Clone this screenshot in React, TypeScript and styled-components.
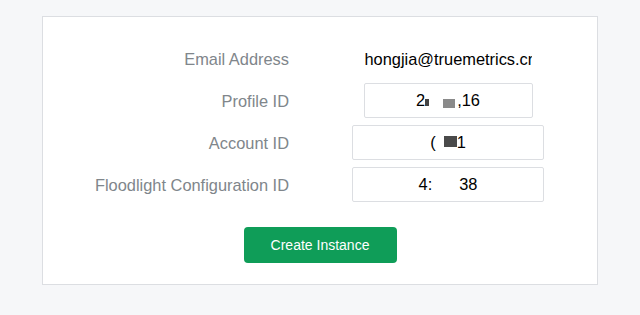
import React from "react";
import styled, { createGlobalStyle } from "styled-components";

const Global = createGlobalStyle`
  html, body { margin: 0; padding: 0; background: #f6f7f9; }
  body { font-family: "Liberation Sans", Arial, sans-serif; }
`;

const Page = styled.div`
  padding: 16px 42px 0;
  height: 315px;
  box-sizing: border-box;
`;

const Card = styled.div`
  background: #fff;
  border: 1px solid #dcdee2;
  box-sizing: border-box;
  height: 269px;
  padding: 24px 0 0;
  display: flex;
  flex-direction: column;
  align-items: center;
`;

const Form = styled.div`
  display: grid;
  grid-template-columns: 246px 192px;
  grid-auto-rows: 35px;
  column-gap: 63px;
  row-gap: 7px;
  align-self: flex-start;
`;

const Label = styled.div`
  justify-self: end;
  align-self: center;
  color: #80868b;
  font-size: 16.4px;
  line-height: 20px;
`;

const Value = styled.div`
  justify-self: center;
  align-self: center;
  width: 167px;
  overflow: hidden;
  white-space: nowrap;
  color: #000;
  font-size: 16.4px;
  line-height: 20px;
`;

const Field = styled.div<{ $w: number }>`
  justify-self: center;
  width: ${(p) => p.$w}px;
  height: 35px;
  box-sizing: border-box;
  border: 1px solid #dcdee2;
  border-radius: 2px;
  display: flex;
  align-items: center;
  justify-content: center;
  color: #000;
  font-size: 16.4px;
`;

const Mask = styled.span<{ $w: number; $h: number; $c: string; $ml?: number; $mr?: number; $dy?: number }>`
  display: inline-block;
  width: ${(p) => p.$w}px;
  height: ${(p) => p.$h}px;
  background: ${(p) => p.$c};
  margin-left: ${(p) => p.$ml ?? 0}px;
  margin-right: ${(p) => p.$mr ?? 0}px;
  position: relative;
  top: ${(p) => p.$dy ?? 0}px;
`;

const Gap = styled.span<{ $w: number }>`
  display: inline-block;
  width: ${(p) => p.$w}px;
`;

const Button = styled.button`
  margin-top: 25px;
  width: 153px;
  height: 36px;
  border: none;
  border-radius: 4px;
  background: #0f9d58;
  color: #fff;
  font-family: "Liberation Sans", Arial, sans-serif;
  font-size: 14px;
  cursor: pointer;
`;

export default function App() {
  return (
    <>
      <Global />
      <Page>
        <Card>
          <Form>
            <Label>Email Address</Label>
            <Value>hongjia@truemetrics.cn</Value>

            <Label>Profile ID</Label>
            <Field $w={169}>
              2<Mask $w={4} $h={7} $c="#444" $dy={2} />
              <Gap $w={14} />
              <Mask $w={12} $h={9} $c="#8a8a8a" $dy={3} $mr={2} />
              ,16
            </Field>

            <Label>Account ID</Label>
            <Field $w={192}>
              (<Gap $w={8} />
              <Mask $w={13} $h={11} $c="#4a4a4a" $dy={-1} />1
            </Field>

            <Label>Floodlight Configuration ID</Label>
            <Field $w={192}>
              4:<Gap $w={27} />38
            </Field>
          </Form>
          <Button>Create Instance</Button>
        </Card>
      </Page>
    </>
  );
}
